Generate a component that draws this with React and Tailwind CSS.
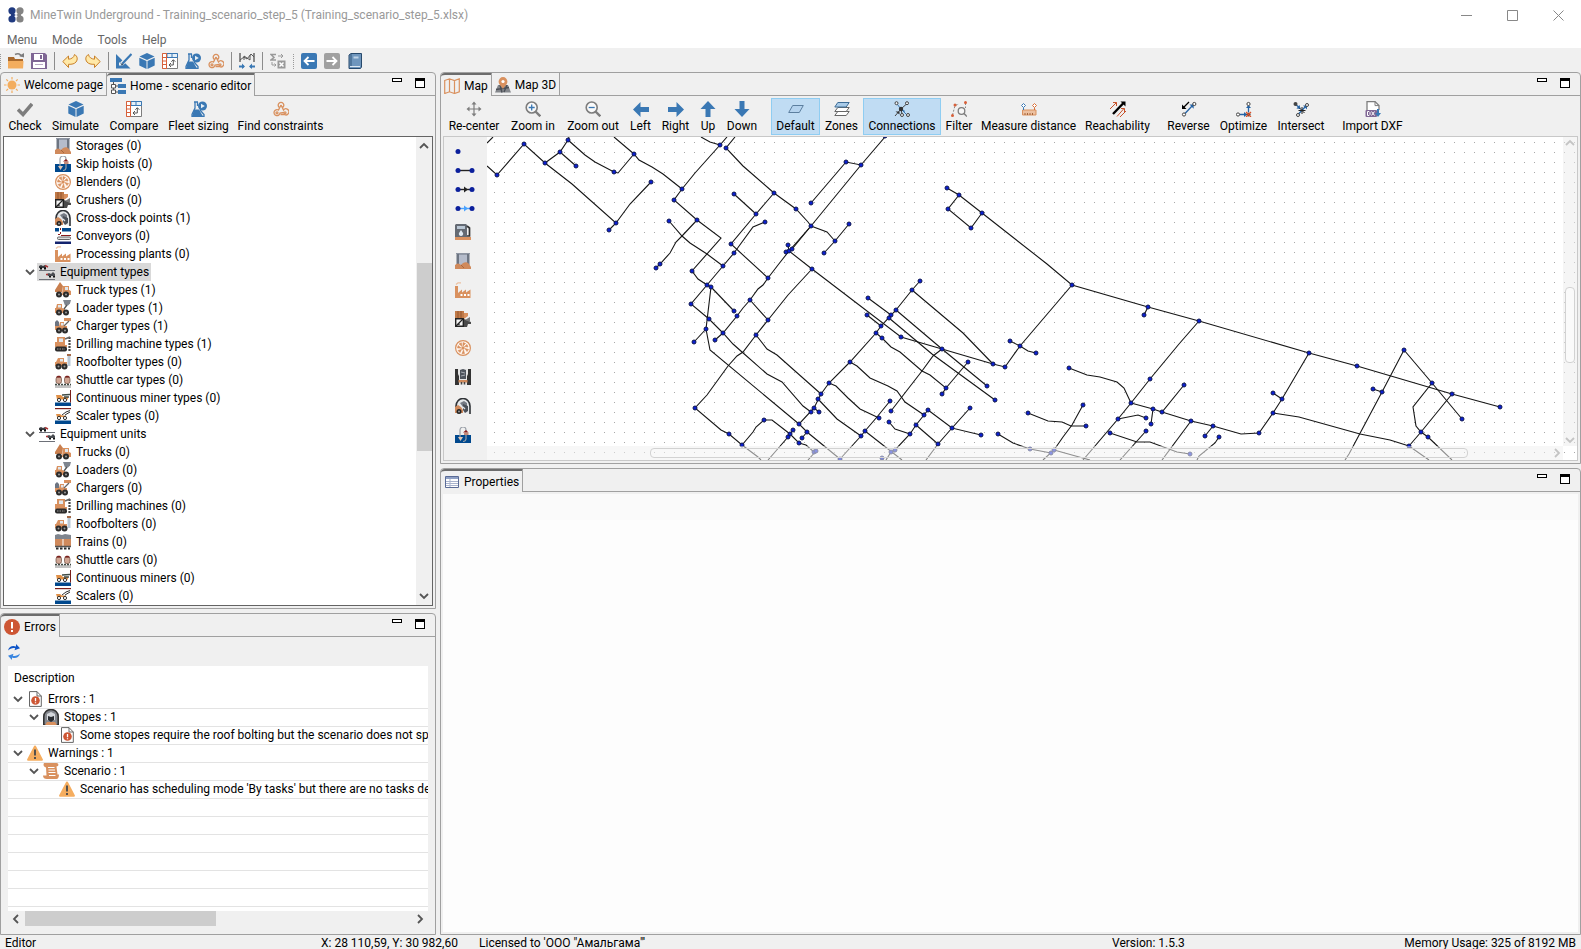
import { useState } from "react";

const BLUE = "#3a78b4";
const ORANGE = "#d9915f";
const GRAY = "#7d7d7d";

const Svg = ({ children, size = 16 }) => (
  <svg width={size} height={size} viewBox="0 0 16 16" fill="none" className="block shrink-0" aria-hidden="true">
    {children}
  </svg>
);

/* wheels shared by all of the vehicles */
const Wheels = ({ a = 4, b = 11 }) => (
  <>
    <circle cx={a} cy="12.5" r="3" fill="#2b2b2b" />
    <circle cx={b} cy="12.5" r="3" fill="#2b2b2b" />
    <circle cx={a} cy="12.5" r="1" fill="#9a9a9a" />
    <circle cx={b} cy="12.5" r="1" fill="#9a9a9a" />
  </>
);

const icons = {
  logo: (
    <Svg>
      <circle cx="4" cy="3.8" r="3.6" fill="#1f3a80" />
      <circle cx="4" cy="12" r="3.6" fill="#1f3a80" />
      <circle cx="12" cy="3.8" r="3.6" fill="#838383" />
      <circle cx="12" cy="12" r="3.6" fill="#838383" />
      <path d="M4 3v10M3 6l3 2-3 2" stroke="#1f3a80" strokeWidth="2" />
      <path d="M12 3v10M13 6l-3 2 3 2" stroke="#838383" strokeWidth="2" />
    </Svg>
  ),
  open: (
    <Svg>
      <path d="M0 4h6l1 2h8v3H0z" fill="#a9692c" />
      <path d="M0 15.500V8h15.500L15 15.500z" fill="#f3ad5e" />
      <path d="M7 1.500c3-1.500 6-.500 6.500 2" stroke={GRAY} strokeWidth="1.500" />
      <path d="M11 3l5 1.500V0z" fill={GRAY} />
    </Svg>
  ),
  save: (
    <Svg>
      <path d="M0 0h14l2 2v14H0z" fill="#7f6694" />
      <path d="M3 1h9v6H3zM2 9h12v6H2z" fill="#fff" />
      <path d="M9 2h2v4H9z" fill="#7f6694" />
      <path d="M4 11.500h8" stroke="#b8a9c4" />
    </Svg>
  ),
  undo: (
    <Svg>
      <path d="M.8 8.500l5.700-5.500v3.200C9.500 6 12 4.500 12.500 1.500c3 1.500 3.500 5 1.500 7.500-1.500 1.800-4 2.500-7.500 2.300V14.500z" fill="#ffe9a8" stroke="#c9812a" />
    </Svg>
  ),
  redo: (
    <Svg>
      <path d="M15.200 8.500L9.500 3v3.200C6.500 6 4 4.500 3.500 1.500.5 3 0 6.500 2 9c1.500 1.800 4 2.500 7.500 2.300V14.500z" fill="#ffe9a8" stroke="#c9812a" />
    </Svg>
  ),
  design: (
    <Svg>
      <path d="M0 1l14.500 14.500H0z" fill={BLUE} />
      <path d="M3 9l3.500 3.500H3z" fill="#f0f0f0" />
      <path d="M15.500 1.500L5.500 11" stroke="#f0f0f0" strokeWidth="4" />
      <path d="M15.500 1L6.500 10.500" stroke={BLUE} strokeWidth="2.200" />
      <path d="M5 12.500l.7-2.700 2 1.800z" fill="#33506e" />
    </Svg>
  ),
  cube: (
    <Svg>
      <path d="M8 0l7.500 3.500L8 7 .5 3.500z" fill={BLUE} />
      <path d="M.3 4.700L7.500 8v8L.3 12.500zM15.700 4.700L8.500 8v8l7.200-3.500z" fill={BLUE} />
    </Svg>
  ),
  compare: (
    <Svg>
      <path d="M.5.500h15v15H.5z" fill="#fff" stroke={GRAY} />
      <path d="M5 .500h10.500V4.500H5z" fill="#e6f0f8" stroke={BLUE} />
      <path d="M10 1v3" stroke={BLUE} />
      <path d="M.5.500h4v15h-4zM.5 4.500h4M.5 8h4M.5 11.500h4" fill="#fff" stroke="#d8603a" />
      <path d="M7.500 12h3.800V7M9 10l-2 2 2 2M9.300 8.700l2-2 2 2" stroke="#555" />
    </Svg>
  ),
  flask: (
    <Svg>
      <path d="M3 1h4M4 1v6L1 13.500V15.500h12v-2L9 9M6.500 1v4" stroke={BLUE} strokeWidth="1.300" />
      <path d="M3 8.500h5l4 7H1z" fill={BLUE} />
      <circle cx="11.500" cy="5" r="4.500" fill={BLUE} />
      <path d="M10 2.800v4.400L13.800 5z" fill="#e8f0f6" />
    </Svg>
  ),
  knot: (
    <Svg>
      <g stroke={ORANGE} strokeWidth="1.300">
        <path d="M6.500 6.500a2.800 2.800 0 1 1 3 0M8 4l2.500 5a3 3 0 1 1 1 4.500H7.500" />
        <path d="M8 4L5.500 9a3 3 0 1 0 1.500 3l4-.5" />
        <circle cx="4" cy="11.800" r="1" />
        <circle cx="12" cy="11.800" r="1" />
      </g>
    </Svg>
  ),
  graph: (
    <Svg>
      <path d="M1 0v9M15 0v9" stroke="#222" />
      <path d="M1 7l4-3 3 2 4-5 3 3M5 7V3l6 4V2" stroke="#555" />
      <path d="M0 13.500h5M16 13.500h-5" stroke={BLUE} strokeWidth="2" />
      <path d="M3 10.500l3 3-3 2.500zM13 10.500l-3 3 3 2.500z" fill={BLUE} />
    </Svg>
  ),
  formula: (
    <Svg>
      <path d="M6 1.500H1L4 4.500 1 7h5" stroke="#999" strokeWidth="1.500" />
      <path d="M8 3h5m-2-2l2 2-2 2M2 9v3h4M4.500 10.500l1.500 1.500-1.500 1.500" stroke="#999" />
      <path d="M7.500 7.500h8v8h-8z" fill="#999" />
      <path d="M9.500 9.500l4 4m0-4l-4 4" stroke="#fff" strokeWidth="1.500" />
    </Svg>
  ),
  back: (
    <Svg>
      <rect width="16" height="16" rx="2" fill={BLUE} />
      <path d="M13.500 8H3.500M7.500 4l-4 4 4 4" stroke="#fff" strokeWidth="1.800" />
    </Svg>
  ),
  forward: (
    <Svg>
      <rect width="16" height="16" rx="2" fill="#a0a0a0" />
      <path d="M2.500 8h10M8.500 4l4 4-4 4" stroke="#fff" strokeWidth="1.800" />
    </Svg>
  ),
  book: (
    <Svg>
      <path d="M2 2l2-1.500h10.500V14l-1 1.500H2z" fill="#6f96bd" stroke="#27496c" />
      <path d="M4 1v12" stroke="#35597d" />
      <path d="M6.500 3.500h5v2h-5z" fill="#bfd3e6" />
      <path d="M3 13.500h10" stroke="#dce7f0" />
    </Svg>
  ),
  sun: (
    <Svg>
      <circle cx="8" cy="8" r="4.500" fill="#f3ad5e" />
      <path d="M8 0v2.500M8 13.500V16M0 8h2.500M13.500 8H16M2.300 2.300L4 4M12 12l1.700 1.700M2.300 13.700L4 12M12 4l1.700-1.700" stroke="#f3ad5e" strokeWidth="1.200" />
    </Svg>
  ),
  home: (
    <Svg>
      <path d="M0 0h12v4H0zM8 6h8v4H8zM8 12h8v4H8z" fill={BLUE} />
      <path d="M3.500 4v3M3.500 10v2M6 8h2M6 14h2" stroke="#555" />
      <path d="M1.500 6.500h4v3.500h-4zM1.500 12h4v3.500h-4z" fill="#fff" stroke="#555" />
    </Svg>
  ),
  check: (
    <Svg>
      <path d="M1 8.500l5 5L15 3" stroke={GRAY} strokeWidth="3.500" />
    </Svg>
  ),
  map: (
    <Svg>
      <path d="M.7 2.500L5.500.8l5 1.700 4.800-1.700v13l-4.800 1.700-5-1.700-4.800 1.700zM5.500.800v13M10.500 2.500v13" stroke={ORANGE} strokeWidth="1.200" />
    </Svg>
  ),
  map3d: (
    <Svg>
      <path d="M0 15.500L3 8h10l3 7.500z" fill="#84878c" />
      <path d="M5 8l2 7.500M9 15l3-7M1 12.500l13-2" stroke="#4b4f56" strokeWidth="1.400" />
      <path d="M8 12C6 8.500 3.600 7.500 3.600 4.500a4.400 4.400 0 0 1 8.800 0C12.400 7.500 10 8.500 8 12z" fill={ORANGE} />
      <circle cx="8" cy="4.500" r="1.600" fill="#fff" />
    </Svg>
  ),
  recenter: (
    <Svg>
      <path d="M8 2v12M2 8h12" stroke={GRAY} strokeWidth="1.200" />
      <path d="M8 .500l2.500 3h-5zM8 15.500l2.500-3h-5zM.5 8l3-2.500v5zM15.500 8l-3-2.500v5z" fill={GRAY} />
    </Svg>
  ),
  zoomIn: (
    <Svg>
      <circle cx="6.700" cy="6.500" r="5.500" fill="#fafafa" stroke={GRAY} strokeWidth="1.600" />
      <path d="M10.500 10.500l4.800 4.800" stroke={GRAY} strokeWidth="2.400" />
      <path d="M3.700 6.500h6M6.700 3.500v6" stroke={BLUE} strokeWidth="1.300" />
    </Svg>
  ),
  zoomOut: (
    <Svg>
      <circle cx="6.700" cy="6.500" r="5.500" fill="#fafafa" stroke={GRAY} strokeWidth="1.600" />
      <path d="M10.500 10.500l4.800 4.800" stroke={GRAY} strokeWidth="2.400" />
      <path d="M3.700 6.500h6" stroke={BLUE} strokeWidth="1.300" />
    </Svg>
  ),
  left: <Svg><path d="M0 8.500L7.500 1v5H16v5H7.500v5z" fill={BLUE} /></Svg>,
  right: <Svg><path d="M16 8.500L8.500 1v5H0v5h8.500v5z" fill={BLUE} /></Svg>,
  up: <Svg><path d="M8 0L.5 8h5v8h5V8h5z" fill={BLUE} /></Svg>,
  down: <Svg><path d="M8 16L.5 8h5V0h5v8h5z" fill={BLUE} /></Svg>,
  layer: <Svg><path d="M.7 11.500l4-7h10.600l-4 7z" fill="#b5d3ee" stroke="#5c7f9f" /></Svg>,
  zones: (
    <Svg>
      <path d="M.8 14.500l3-4h11.400l-3 4z" fill="#fff" stroke="#666" />
      <path d="M.8 10.500l3-4h11.400l-3 4z" fill="#fff" stroke="#666" />
      <path d="M.8 6l3-4.500h11.400l-3 4.500z" fill="#a9cbe8" stroke="#3d6c96" />
    </Svg>
  ),
  connections: (
    <Svg>
      <path d="M7 8L3 3M7 8l6 6M7.500 8L11 10.500" stroke={BLUE} />
      <path d="M7 8l5.500-5M7 8l1 5M1 15l6-7" stroke="#444" />
      <circle cx="7" cy="8" r="2.200" fill="#333" />
      <path d="M1.500 10.500H5.500v3z" fill="#333" />
      <g fill="#f0f6fb" stroke="#444">
        <circle cx="2.500" cy="2.200" r="1.500" />
        <circle cx="13" cy="2.200" r="1.500" />
        <circle cx="8" cy="14" r="1.500" />
        <circle cx="14" cy="14" r="1.500" />
      </g>
    </Svg>
  ),
  filter: (
    <Svg>
      <path d="M1.500 14L4 4.500l4-1.500M14.500 2v5" stroke="#888" strokeDasharray="2 1.500" />
      <g fill="#d8603a">
        <circle cx="4" cy="4" r="1.500" />
        <circle cx="1.500" cy="14.500" r="1.500" />
        <circle cx="14.500" cy="1.500" r="1.500" />
      </g>
      <circle cx="10.500" cy="10" r="3.300" fill="#f6f6f6" stroke={GRAY} strokeWidth="1.300" />
      <path d="M13 12.500l3 3" stroke={GRAY} strokeWidth="1.500" />
    </Svg>
  ),
  measure: (
    <Svg>
      <path d="M1.500 9h13.500v5H1.500z" fill="#ecc0a0" stroke={ORANGE} />
      <path d="M4 14v-2M6.500 14v-2M9 14v-2M11.500 14v-2" stroke="#a5663c" />
      <path d="M2.500 6.500V9" stroke={BLUE} />
      <path d="M13.500 6.500V9" stroke="#d8703a" />
      <path d="M2.500 2.500l2 2-2 2-2-2z" fill="#fff" stroke={BLUE} />
      <path d="M13.500 2.500l2 2-2 2-2-2z" fill="#fff" stroke="#d8703a" />
    </Svg>
  ),
  reach: (
    <Svg>
      <path d="M0 8l6.500-6.500M3 1.500h3.500V5M7 15.500l7-8M11 7.500h3.500V11M10 16l6-6" stroke="#c8532c" />
      <path d="M3 13L14 1.500" stroke="#000" strokeWidth="2.400" />
      <path d="M10.500.500H15.500V5.500z" fill="#000" />
    </Svg>
  ),
  reverse: (
    <Svg>
      <path d="M8 1L2.500 6.500" stroke="#000" strokeWidth="1.200" />
      <path d="M1 3.500V8h4.500z" fill="#000" />
      <path d="M4 12.500l8-8.500" stroke="#2563a5" strokeWidth="1.300" />
      <path d="M8.500 3.500h4.200v4.200z" fill="#2563a5" />
      <circle cx="3" cy="13.500" r="1.600" fill="#fff" stroke="#444" />
      <circle cx="13.300" cy="3" r="1.600" fill="#fff" stroke="#444" />
    </Svg>
  ),
  optimize: (
    <Svg>
      <path d="M3.500 13.500h7M12.500 11V5" stroke="#2563a5" strokeWidth="1.300" />
      <path d="M8 11l3 2.500L8 16zM10 7l2.500-3L15 7z" fill="#2563a5" />
      <circle cx="2" cy="13.500" r="1.600" fill="#fff" stroke="#444" />
      <circle cx="12.500" cy="3" r="1.600" fill="#fff" stroke="#444" />
      <circle cx="12.500" cy="13.500" r="2" fill="#333" />
      <path d="M10 11l5 5m0-5l-5 5" stroke="#d8532c" strokeWidth="1.200" />
    </Svg>
  ),
  intersect: (
    <Svg>
      <path d="M2 3l5 4M5 13.500l8.500-9" stroke="#2563a5" strokeWidth="1.300" />
      <path d="M7.500 8l-4-.500L6.500 4zM10 4.500h4v4z" fill="#2563a5" />
      <path d="M9 6v7M5.500 9.500h7M6.500 7l5 5" stroke="#222" />
      <circle cx="2.500" cy="3" r="2" fill="#444" />
      <circle cx="5" cy="14" r="1.500" fill="#fff" stroke="#444" />
      <circle cx="14" cy="4" r="1.500" fill="#fff" stroke="#444" />
    </Svg>
  ),
  dxf: (
    <Svg>
      <path d="M2 9V.600h8L14 4.500V9" fill="#fff" stroke={GRAY} strokeWidth="1.300" />
      <path d="M10 .600v4h4" stroke={GRAY} />
      <rect x=".5" y="9" width="11.500" height="7" rx="1" fill="#7f6694" />
      <path d="M2.500 10.500h1.500l1 1v2l-1 1H2.500zM6.500 10.500l3 4m0-4l-3 4" stroke="#fff" />
      <path d="M13 8v5" stroke={BLUE} strokeWidth="2" />
      <path d="M10 12h6l-3 4z" fill={BLUE} />
    </Svg>
  ),
  storage: (
    <Svg>
      <path d="M1.500 0h13v12h-13z" fill="#6d7582" />
      <path d="M4 1.500h8V12H4z" fill="#b5bccb" />
      <path d="M1 .500h14" stroke="#8e95a2" />
      <path d="M0 16v-4c2-2 4-2 6 0 2-3 6-4 8-1l2 3v2z" fill="#d08a5c" />
      <path d="M6 12l3 3" stroke="#a9663c" />
    </Svg>
  ),
  skip: (
    <Svg>
      <path d="M0 8h16v8H0z" fill="#00488d" />
      <path d="M5 12V3a3 3 0 0 1 6 0v9a3 3 0 0 1-3 2.500" stroke="#9aa0a8" strokeWidth="1.200" />
      <path d="M3 10l2.500 4L8 10z" fill="#e2c7b5" />
      <path d="M8 5.500l3-2.500 2.500 2.500z" fill="#8a1c1c" />
      <path d="M9 5.500h4.500V8H9z" fill="#c48a7a" />
    </Svg>
  ),
  blender: (
    <Svg>
      <circle cx="8" cy="8" r="7.400" fill="#fff6ef" stroke={ORANGE} strokeWidth="1.200" />
      <path d="M8 6V2.500l2.500 1zM9.500 6.500l2.500-2 1 2.500zM10 8.500l3.500 1-1.500 2zM8.500 10l1 3.500-2.500.200zM6.500 9.500l-1.500 3-2-2zM6 8l-3.500 0 .600-2.500zM7 6.300L4 4l2.300-1.300z" fill={ORANGE} stroke={ORANGE} strokeWidth=".6" />
      <circle cx="8" cy="8" r="1.700" fill={ORANGE} />
    </Svg>
  ),
  crusher: (
    <Svg>
      <path d="M0 0h9v7H0z" fill="#c07a48" />
      <path d="M3 0v7M6 0v7" stroke="#96572f" />
      <path d="M9 2h4v3L9 8z" fill="#d9915f" />
      <path d="M.7 7.700h7.600v7.600H.7z" fill="#f3f3f3" stroke="#222" strokeWidth="1.400" />
      <path d="M1 15l7-7M4 12v2" stroke="#222" strokeWidth="1.200" />
      <path d="M9 8l7 3v2l-3 0-1 3H9z" fill="#4a4a4a" />
      <path d="M10 9l5-3v5z" fill="#777" />
    </Svg>
  ),
  crossdock: (
    <Svg>
      <path d="M1 12V8a7 7.500 0 0 1 14 0v8" fill="#e6e8ea" stroke="#2f3236" strokeWidth="1.600" />
      <path d="M5 5l4-2 3 2v3l-4 1z" fill="#767b84" />
      <path d="M8 6l5 2v5l-3 2-2-3z" fill="#4b5058" />
      <path d="M8 9l2 2" stroke="#dfe2e6" strokeWidth="1.200" />
      <path d="M0 9l3-2 3 2 2 3v3H0z" fill="#d08a5c" />
      <circle cx="4" cy="13.500" r="2.500" fill="#222" />
      <circle cx="4" cy="13.500" r=".9" fill="#aaa" />
    </Svg>
  ),
  conveyor: (
    <Svg>
      <path d="M0 0h4v3.500H0zM7 0h9v3.500H7z" fill="#00488d" />
      <path d="M5.500 0v2M5.500 4v2M3 6.500h2M6 7.500h10" stroke="#8a1c1c" />
      <rect x="2.500" y="9" width="13" height="2.500" rx="1" fill="#ddd" stroke="#666" />
      <path d="M0 13.500h16V16H0z" fill="#14246e" />
    </Svg>
  ),
  plant: (
    <Svg>
      <path d="M0 16V4h3v7l4-3.500v3l4-3v3l4.500-3V16z" fill={ORANGE} />
      <path d="M1 2.500L3 .800h3" stroke="#ecc0a0" strokeWidth="1.300" />
      <path d="M5.500 12h2v2h-2zM9 12h2v2H9zM12.500 12h2v2h-2z" fill="#fff" />
    </Svg>
  ),
  types: (
    <Svg>
      <path d="M0 6.500h16M0 15.500h16" stroke="#6d7078" />
      <path d="M0 2l2-1 2 1 2-1 1 2v1H0z" fill="#3a3d42" />
      <path d="M6 1.500l3 1.500" stroke="#a33" strokeWidth="1.500" />
      <path d="M1 4.500h2M5 4.500h2M10 12.500h2M14 12.500h2" stroke="#111" strokeWidth="2" />
      <path d="M8 10l2-1 2 1 2-2 2 2v2H9z" fill="#4a4d52" />
      <path d="M7 10.500h2" stroke="#a33" strokeWidth="1.500" />
    </Svg>
  ),
  truck: (
    <Svg>
      <path d="M0 8l5-8 3 4-1 6H0z" fill="#c97f4e" />
      <path d="M8 4h6v4l2 1v4H7z" fill="#d9915f" />
      <path d="M10 5h3v3h-3z" fill="#dfe7ee" />
      <Wheels />
    </Svg>
  ),
  loader: (
    <Svg>
      <path d="M1 8l1-4h5v4l3 1v4H0V8z" fill="#d9915f" />
      <path d="M3 5h3v2.500H3z" fill="#dfe7ee" />
      <path d="M8 0h8l-1 3.500-2 2h-3z" fill="#7f858e" />
      <path d="M9 9l3-4" stroke="#555" strokeWidth="1.300" />
      <Wheels />
    </Svg>
  ),
  charger: (
    <Svg>
      <path d="M0 4l2-2 2 2v4H0z" fill="#6d7582" />
      <path d="M0 8h4l1-4h4v4h3v4H0z" fill="#d9915f" />
      <path d="M6 5h2.500v2.500H6z" fill="#dfe7ee" />
      <path d="M9 0h7v3H9z" fill="#d9915f" />
      <path d="M9 8l5-5" stroke="#666" strokeWidth="1.300" />
      <Wheels b={10} />
    </Svg>
  ),
  drill: (
    <Svg>
      <path d="M2 1h8v8h2v2H0V6h2z" fill="#d9915f" />
      <path d="M4 2.500h4V6H4z" fill="#dfe7ee" />
      <rect x="0" y="10.500" width="12" height="5" rx="2" fill="#2b2b2b" />
      <path d="M2 13h8" stroke="#999" strokeDasharray="1.500 1" />
      <path d="M14.500 1v15" stroke="#444" strokeWidth="2.200" strokeDasharray="2 1" />
      <path d="M10 3l5-2" stroke="#666" strokeWidth="1.500" />
    </Svg>
  ),
  bolter: (
    <Svg>
      <path d="M1 8l2-4h6v4h3v4H0V8z" fill="#d9915f" />
      <path d="M5 5h3v2.500H5z" fill="#dfe7ee" />
      <path d="M12.500 1.500h3V12h-3z" fill="#b9c8d6" />
      <path d="M12 0h4v2h-4z" fill="#a56a48" />
      <Wheels a={3.500} b={9.500} />
    </Svg>
  ),
  shuttle: (
    <Svg>
      <path d="M0 13h16v3H0z" fill="#c2c2c2" />
      <path d="M0 12.500h16" stroke="#3f4a44" strokeWidth="1.600" strokeDasharray="2 1" />
      <rect x="1" y="5" width="5.500" height="6.500" rx="2" fill="#cfa594" stroke="#6a4a3c" strokeWidth=".7" />
      <rect x="9.500" y="5" width="5.500" height="6.500" rx="2" fill="#cfa594" stroke="#6a4a3c" strokeWidth=".7" />
      <path d="M1 5.500C1.500 3 6 3 6.500 5.500zM9.500 5.500C10 3 14.500 3 15 5.500z" fill="#7a1f1a" />
    </Svg>
  ),
  miner: (
    <Svg>
      <path d="M0 12.500h16V16H0z" fill="#00488d" />
      <path d="M15.500 0v12.500" stroke="#7a1f1a" />
      <path d="M1 5h5l2 2h5v2.500H2z" fill="#e09048" />
      <path d="M7 5l8-.500M9 7h5" stroke="#3f4a44" strokeWidth="1.300" />
      <circle cx="4" cy="10" r="1.600" fill="#fff" stroke="#333" />
      <circle cx="10" cy="10" r="1.600" fill="#fff" stroke="#333" />
    </Svg>
  ),
  scaler: (
    <Svg>
      <path d="M0 12.500h16V16H0z" fill="#00488d" />
      <path d="M0 .600h16" stroke="#7a1f1a" strokeWidth="1.200" />
      <path d="M1 6h4l2 1.500h4V9H2z" fill="#e09048" />
      <path d="M7 7l4-3 4-1.500M10 7l5-3" stroke="#333" />
      <circle cx="4" cy="10" r="1.600" fill="#fff" stroke="#333" />
      <circle cx="10" cy="10" r="1.600" fill="#fff" stroke="#333" />
    </Svg>
  ),
  train: (
    <Svg>
      <path d="M0 1l3-1 4 1 3-1 6 1v4H0z" fill="#7f858e" />
      <path d="M0 5h7.500v7H0zM8.500 5H16v7H8.500z" fill="#d08a5c" />
      <path d="M0 12.500h16" stroke="#555" strokeWidth="1.500" />
      <path d="M1 14.500h14" stroke="#2b2b2b" strokeWidth="2" strokeDasharray="2.500 1.500" />
    </Svg>
  ),
  fuel: (
    <Svg>
      <path d="M0 13h16v3H0z" fill={ORANGE} />
      <path d="M0 1l1-1h10l1 1v12H0z" fill="#646a73" />
      <path d="M2 2h8v3H2z" fill="#b9c6d3" />
      <path d="M6 6l2 3a2.200 2.200 0 1 1-4 0z" fill="#dfe9f2" />
      <path d="M12 2l2.500 2v8H12" stroke="#333" strokeWidth="1.700" />
    </Svg>
  ),
  stopeWide: (
    <Svg>
      <path d="M0 0h3v4l1 3v9H0zM16 0h-3v4l-1 3v9h4z" fill="#333" />
      <path d="M3 0h10v4l-1 3v9H4V7L3 4z" fill="#e6e6e6" />
      <path d="M5 1l3-1 3 1v9H5z" fill="#4d535c" />
      <path d="M6 3l4 1M6 7l4-1" stroke="#a8adb5" />
      <path d="M3.500 11h9v2.500h-9z" fill="#d08a5c" />
      <path d="M6.500 13v2.500M9.500 13v2.500" stroke="#444" strokeWidth="1.500" />
    </Svg>
  ),
  error: (
    <Svg>
      <circle cx="8" cy="8" r="8" fill="#cd5634" />
      <path d="M8 3v6.500M8 11v2" stroke="#fff" strokeWidth="2" />
    </Svg>
  ),
  errorFile: (
    <Svg>
      <path d="M2.500.600H10L14.300 5v10.400H2.500z" fill="#fff" stroke="#666" />
      <path d="M10 .600V5h4.300" stroke="#666" />
      <circle cx="8.500" cy="9.500" r="4.300" fill="#cd5634" />
      <path d="M8.500 7v3.300M8.500 11.200v1" stroke="#fff" strokeWidth="1.300" />
    </Svg>
  ),
  stope: (
    <Svg>
      <path d="M.8 16V7.500a7.200 7 0 0 1 14.400 0V16z" fill="#85888e" stroke="#333" strokeWidth="1.600" />
      <path d="M4 5l4-2 4 2v6l-4 1-4-1z" fill="#d5d8dc" />
      <path d="M5 7l3 1 3-1v4l-3 2-3-2z" fill="#2b2e33" />
      <path d="M2 16l2-3h8l2 3z" fill={ORANGE} />
    </Svg>
  ),
  warning: (
    <Svg>
      <path d="M8 .500c.6 0 .9.300 1.200.9l6.600 12.800c.4.900 0 1.600-.9 1.600H1.100c-.9 0-1.300-.7-.9-1.600L6.800 1.400C7.100.800 7.400.500 8 .500z" fill="#f5ad5f" />
      <path d="M8 4.500v6M8 12v2" stroke="#4d4d4d" strokeWidth="1.900" />
    </Svg>
  ),
  scroll: (
    <Svg>
      <path d="M1 0h12.500C16 0 16 3.500 13.500 3.500L14.500 11.500H16c0 2.500-1 4.500-2.500 4.500H4c-2.500 0-4-1-4-3.500h3.500L3 4.500C.5 4 0 1.500 1 0z" fill={ORANGE} />
      <path d="M5 4.500h6.500M5.500 7h6.500M5.500 9.500h7M6 12.500h6.500" stroke="#fff" strokeWidth="1.200" />
    </Svg>
  ),
  refresh: (
    <Svg>
      <path d="M2 6.500C3 2 7 1.200 10 2.500V0l4 4.300-5.500 2 .7-2C7 3.500 4 4.500 2 6.500z" fill="#0f55c8" />
      <path d="M14 9.500c-1 4.500-5 5.300-8 4V16l-4-4.300 5.500-2-.7 2c2.200.8 5.200-.2 7.200-2.200z" fill="#3a86e0" />
    </Svg>
  ),
  properties: (
    <Svg>
      <path d="M1.500 2.500h13v11h-13z" fill="#fff" stroke="#5a6b96" />
      <path d="M2 3h12v2H2z" fill="#8fa0c4" />
      <path d="M2 7.500h12M2 9.500h12M2 11.500h12M6 5v8" stroke="#a9b3cd" />
    </Svg>
  ),
};

const mainTools = ["open", "save", "|", "undo", "redo", "|", "design", "cube", "compare", "flask", "knot", "|", "graph", "|", "formula", ":", "back", "forward", "book"];

const editorTools = [
  { label: "Check", icon: "check", w: "w-[44px]" },
  { label: "Simulate", icon: "cube", w: "w-[57px]" },
  { label: "Compare", icon: "compare", w: "w-[60px]" },
  { label: "Fleet sizing", icon: "flask", w: "w-[69px]" },
  { label: "Find constraints", icon: "knot", w: "w-[95px]" },
];

const mapTools = [
  { label: "Re-center", icon: "recenter", w: "w-[62px]" },
  { label: "Zoom in", icon: "zoomIn", w: "w-[56px]" },
  { label: "Zoom out", icon: "zoomOut", w: "w-[64px]" },
  { label: "Left", icon: "left", w: "w-[31px]" },
  { label: "Right", icon: "right", w: "w-[39px]" },
  { label: "Up", icon: "up", w: "w-[26px]" },
  { label: "Down", icon: "down", w: "w-[42px]" },
  null,
  { label: "Default", icon: "layer", w: "w-[49px]", active: true },
  { label: "Zones", icon: "zones", w: "w-[43px]" },
  { label: "Connections", icon: "connections", w: "w-[78px]", active: true },
  { label: "Filter", icon: "filter", w: "w-[36px]" },
  { label: "Measure distance", icon: "measure", w: "w-[103px]" },
  { label: "Reachability", icon: "reach", w: "w-[75px]" },
  null,
  { label: "Reverse", icon: "reverse", w: "w-[51px]" },
  { label: "Optimize", icon: "optimize", w: "w-[59px]" },
  { label: "Intersect", icon: "intersect", w: "w-[56px]" },
  null,
  { label: "Import DXF", icon: "dxf", w: "w-[71px]" },
];

const tree = [
  { label: "Storages (0)", icon: "storage" },
  { label: "Skip hoists (0)", icon: "skip" },
  { label: "Blenders (0)", icon: "blender" },
  { label: "Crushers (0)", icon: "crusher" },
  { label: "Cross-dock points (1)", icon: "crossdock" },
  { label: "Conveyors (0)", icon: "conveyor" },
  { label: "Processing plants (0)", icon: "plant" },
  { label: "Equipment types", icon: "types", group: true },
  { label: "Truck types (1)", icon: "truck" },
  { label: "Loader types (1)", icon: "loader" },
  { label: "Charger types (1)", icon: "charger" },
  { label: "Drilling machine types (1)", icon: "drill" },
  { label: "Roofbolter types (0)", icon: "bolter" },
  { label: "Shuttle car types (0)", icon: "shuttle" },
  { label: "Continuous miner types (0)", icon: "miner" },
  { label: "Scaler types (0)", icon: "scaler" },
  { label: "Equipment units", icon: "types", group: true },
  { label: "Trucks (0)", icon: "truck" },
  { label: "Loaders (0)", icon: "loader" },
  { label: "Chargers (0)", icon: "charger" },
  { label: "Drilling machines (0)", icon: "drill" },
  { label: "Roofbolters (0)", icon: "bolter" },
  { label: "Trains (0)", icon: "train" },
  { label: "Shuttle cars (0)", icon: "shuttle" },
  { label: "Continuous miners (0)", icon: "miner" },
  { label: "Scalers (0)", icon: "scaler" },
];

const problems = [
  { label: "Errors : 1", icon: "errorFile", pad: "pl-1", open: true },
  { label: "Stopes : 1", icon: "stope", pad: "pl-5", open: true },
  { label: "Some stopes require the roof bolting but the scenario does not specify", icon: "errorFile", pad: "pl-9" },
  { label: "Warnings : 1", icon: "warning", pad: "pl-1", open: true },
  { label: "Scenario : 1", icon: "scroll", pad: "pl-5", open: true },
  { label: "Scenario has scheduling mode 'By tasks' but there are no tasks defined", icon: "warning", pad: "pl-9" },
];

/* tunnels of the mine, as polylines in plan units */
const tunnels = [
  "487,166 497,175 524,144 545,163 560,152 568,140 569,137",
  "487,143 493,137",
  "560,152 576,166",
  "568,140 585,155 595,162 614,172 618,173 634,154",
  "614,137 634,154 639,160 652,167 663,174 682,189",
  "545,163 572,184 616,223 609,230",
  "616,223 630,204 651,182",
  "682,189 695,173 720,145 727,137",
  "701,137 710,142 720,145",
  "735,137 726,148 743,166 774,193",
  "682,189 674,200 697,220 721,238 692,271 698,279 707,285 711,287",
  "697,220 682,236 676,242 670,253 660,264 656,268",
  "669,221 682,236 690,243 707,254 723,266",
  "734,194 756,214",
  "774,193 756,214 731,244 768,278",
  "765,222 753,227 734,253 723,266 707,285 691,304 709,319 723,333 733,344 742,352 767,374 782,382 803,406 811,412",
  "774,193 796,209 808,222 811,226 827,232 835,241 849,224",
  "835,241 824,253",
  "811,203 846,162 861,165 885,137",
  "861,165 811,226 789,251",
  "811,226 792,249 786,252",
  "788,245 789,251 812,269 901,337 942,349 993,364 1005,367 1020,346 1072,285",
  "789,251 778,265 768,278 763,285 758,289 750,300 743,308 737,316 723,333 715,340",
  "711,287 734,311",
  "711,287 706,329 710,350 799,424",
  "706,329 694,342",
  "750,300 768,320 756,335 743,352 737,356 728,366 707,395 695,408 721,430 729,434 742,445 753,432 756,427 764,420 772,420 790,434 799,443 806,445 814,452",
  "812,269 788,295 768,320",
  "756,335 767,349 777,355 821,394",
  "742,445 758,457 761,460",
  "768,460 788,437 793,430",
  "920,281 912,290 896,310 881,326 876,333 850,362 829,383 821,394 814,408 799,424 807,432 840,459",
  "807,432 802,438",
  "814,408 819,412",
  "912,290 963,333 993,364",
  "868,298 891,315",
  "889,318 932,354 995,400",
  "896,310 942,349 987,386",
  "867,315 881,326",
  "876,333 882,338 891,347 900,352 922,371 930,375 946,388 942,394",
  "946,388 968,362",
  "942,349 933,356 922,371 908,389 891,411",
  "850,362 857,366 870,378 888,386 897,391 905,402 924,415",
  "829,383 836,386 848,398 860,409 879,418",
  "818,399 837,419 861,436",
  "890,401 877,417 865,431 861,436 840,459",
  "865,431 902,460",
  "889,422 895,429 910,434",
  "928,410 924,415 916,425 910,434 895,450 891,452 886,460",
  "928,410 952,428 970,408",
  "981,435 952,428 938,444 926,460",
  "916,425 938,444",
  "816,451 808,460",
  "998,434 1013,443 1030,449 1051,453",
  "1083,405 1072,425 1063,437 1054,450 1043,460",
  "1054,450 1090,460",
  "1028,413 1048,421 1062,422 1071,426 1086,426",
  "1069,368 1087,375 1100,377 1117,382 1124,388 1131,403",
  "1199,321 1179,344 1150,379 1131,403 1118,419 1083,460",
  "1131,403 1153,409 1162,412 1184,385",
  "1153,409 1151,424",
  "1118,419 1138,415 1146,418",
  "1110,433 1137,442 1150,442 1177,452 1190,454",
  "1146,431 1120,460",
  "1010,341 1020,346 1028,351 1036,353",
  "947,188 959,195 948,209 971,228 982,213",
  "959,195 982,213 1047,264 1072,285 1148,307 1199,321 1309,353 1357,366 1452,394 1500,407",
  "1148,307 1144,315",
  "1309,353 1282,399 1273,413 1259,433 1241,434 1213,426 1191,421 1162,412",
  "1273,393 1282,399",
  "1213,426 1205,436",
  "1191,421 1162,460",
  "1219,437 1215,443 1199,456 1197,460",
  "1273,413 1299,417 1360,434 1390,440 1409,446 1429,460",
  "1373,389 1382,392",
  "1404,350 1382,392 1349,454 1345,460",
  "1404,350 1432,383 1462,419",
  "1432,383 1413,407 1416,426 1421,432 1428,437 1452,460",
  "1452,394 1421,432 1409,446",
];

const nodes = `497,175 524,144 545,163 560,152 568,140 576,166 614,172 634,154 651,182 616,223 609,230 682,189 674,200
697,220 669,221 660,264 656,268 720,145 726,148 774,193 734,194 756,214 765,222 731,244 734,253 796,209 811,203 811,226
788,245 786,252 789,251 792,249 824,253 835,241 849,224 846,162 861,165 885,136 947,188 959,195 948,209 971,228 982,213
692,271 723,266 768,278 707,285 711,287 691,304 734,311 737,316 750,300 768,320 812,269 709,319 706,329 694,342 715,340
723,333 756,335 695,408 729,434 742,445 764,420 799,424 811,412 793,430 790,434 788,437 807,432 802,438 799,443 814,452
816,451 920,281 912,290 896,310 891,315 889,318 881,326 868,298 867,315 876,333 882,338 901,337 942,349 850,362 829,383
821,394 818,399 814,408 819,412 993,364 1005,367 1020,346 1010,341 1036,353 1072,285 1148,307 1144,315 968,362 946,388
942,394 987,386 995,400 890,401 891,411 879,418 865,431 861,436 889,422 910,434 916,425 924,415 928,410 952,428 970,408
981,435 938,444 998,434 1030,449 1054,450 1051,453 1028,413 1086,426 1083,405 1069,368 1131,403 1150,379 1153,409
1162,412 1151,424 1146,418 1118,419 1110,433 1146,431 895,450 891,452 882,458 840,459 1199,321 1309,353 1357,366
1452,394 1500,407 1404,350 1432,383 1462,419 1373,389 1382,392 1282,399 1273,393 1273,413 1259,433 1213,426 1191,421
1184,385 1205,436 1219,437 1190,454 1409,446 1421,432 1428,437`
  .split(/\s+/)
  .map((p) => p.split(",").map(Number));

const Chevron = ({ className = "", color = "#555" }) => (
  <svg width="10" height="10" viewBox="0 0 10 10" className={`block shrink-0 ${className}`} aria-hidden="true">
    <path d="M1 3l4 4 4-4" fill="none" stroke={color} strokeWidth="1.800" />
  </svg>
);

const PanelButtons = () => (
  <div className="ml-auto flex gap-[13px] pr-[10px] pt-[5px]">
    <button aria-label="Minimize panel" className="flex h-2.5 w-2.5 items-start">
      <span className="h-1 w-2.5 border border-black bg-white" />
    </button>
    <button aria-label="Maximize panel" className="h-2.5 w-2.5 border border-t-[3px] border-black bg-white" />
  </div>
);

const Tab = ({ icon, label, active, onClick }) => (
  <button
    onClick={onClick}
    className={
      active
        ? "-mb-px flex h-[23px] items-center gap-1 whitespace-nowrap rounded-tl border-r border-t-2 border-r-[#a0a0a0] border-t-[#6c6c6c] bg-[#f0f0f0] px-[3px]"
        : "flex h-[22px] items-center gap-1 whitespace-nowrap border-r border-[#a0a0a0] px-[3px] pt-px"
    }
  >
    {icons[icon]}
    {label}
  </button>
);

const TabBar = ({ children }) => (
  <div className="flex h-[23px] shrink-0 border-b border-[#a0a0a0]">
    {children}
    <PanelButtons />
  </div>
);

const ToolButton = ({ tool }) => (
  <button
    className={`flex h-[37px] shrink-0 flex-col items-center gap-px whitespace-nowrap border pt-[2px] leading-4 ${tool.w} ${
      tool.active ? "border-[#8fcdf2] bg-[#c0dcf3]" : "border-transparent"
    }`}
  >
    {icons[tool.icon]}
    <span>{tool.label}</span>
  </button>
);

const Handle = () => <span className="h-[15px] w-px border-l border-dotted border-[#999]" />;

const TitleBar = () => (
  <header className="shrink-0 bg-white text-[#666]">
    <div className="flex h-[30px] items-center pl-2 text-[#999]">
      {icons.logo}
      <h1 className="ml-[6px]">MineTwin Underground - Training_scenario_step_5 (Training_scenario_step_5.xlsx)</h1>
      <div className="ml-auto flex">
        {[["Minimize", "M0 5.500h11"], ["Maximize", "M.5.500h10v10H.5z"], ["Close", "M.5.500l10 10m0-10l-10 10"]].map(([name, d]) => (
          <button key={name} aria-label={name} className="flex h-[30px] w-[46px] items-center justify-center">
            <svg width="11" height="11" viewBox="0 0 11 11" fill="none" stroke="#888">
              <path d={d} />
            </svg>
          </button>
        ))}
      </div>
    </div>
    <nav className="flex h-[18px] items-end gap-[15px] pl-[7px]">
      <button>Menu</button>
      <button>Mode</button>
      <button>Tools</button>
      <button>Help</button>
    </nav>
  </header>
);

const MainToolbar = () => (
  <div className="flex h-6 shrink-0 items-center gap-[7px] pt-[2px]">
    <Handle />
    {mainTools.map((name, i) => {
      if (name === "|") return <span key={i} className="h-[18px] w-px bg-[#8c8c8c]" />;
      if (name === ":") return <Handle key={i} />;
      return (
        <button key={i} aria-label={name}>
          {icons[name]}
        </button>
      );
    })}
  </div>
);

const EditorPanel = ({ selected, onSelect }) => (
  <section className="flex min-h-0 flex-1 flex-col rounded-t border border-[#a0a0a0] pb-[2px]">
    <TabBar>
      <Tab icon="sun" label="Welcome page" />
      <Tab icon="home" label="Home - scenario editor" active />
    </TabBar>
    <div className="flex h-10 shrink-0 items-center pl-[2px]">
      {editorTools.map((t) => (
        <ToolButton key={t.label} tool={t} />
      ))}
    </div>
    <div className="mx-[2px] flex min-h-0 flex-1 border border-[#646464] bg-white">
      <ul className="min-w-0 flex-1 overflow-hidden">
        {tree.map((item) => (
          <li key={item.label} className={item.group ? "flex h-[18px] items-center pl-[21px]" : "flex h-[18px] items-center pl-[51px]"}>
            {item.group && <Chevron />}
            <button
              onClick={() => onSelect(item.label)}
              className={`flex h-[18px] items-center gap-[5px] whitespace-nowrap pr-[2px] ${item.group ? "ml-[2px] pl-[2px]" : ""} ${
                selected === item.label ? "bg-[#d9d9d9]" : ""
              }`}
            >
              {icons[item.icon]}
              {item.label}
            </button>
          </li>
        ))}
      </ul>
      <div className="flex w-4 flex-col items-center bg-[#f0f0f0]">
        <Chevron className="my-1 rotate-180" />
        <div className="min-h-0 w-full flex-[108]" />
        <div className="min-h-0 w-[15px] flex-[188] bg-[#cdcdcd]" />
        <div className="min-h-0 w-full flex-[136]" />
        <Chevron className="my-1" />
      </div>
    </div>
  </section>
);

const ErrorsPanel = () => (
  <section className="flex h-[322px] shrink-0 flex-col rounded-t border border-[#a0a0a0]">
    <TabBar>
      <Tab icon="error" label="Errors" active />
    </TabBar>
    <div className="flex h-[29px] shrink-0 items-center pl-[5px]">
      <button aria-label="Refresh">{icons.refresh}</button>
    </div>
    <div className="mx-[7px] min-h-0 flex-1 overflow-hidden bg-white">
      <table className="w-full table-fixed border-collapse">
        <thead>
          <tr className="h-6">
            <th className="pl-[6px] text-left font-normal">Description</th>
          </tr>
        </thead>
        <tbody>
          {problems.map((p) => (
            <tr key={p.label} className="h-[18px] border-b border-[#e3e3e3]">
              <td className="p-0">
                <div className={`flex h-[17px] items-center whitespace-nowrap ${p.pad}`}>
                  <span className="w-[15px] shrink-0">{p.open && <Chevron className="ml-px" />}</span>
                  {icons[p.icon]}
                  <span className="ml-[5px]">{p.label}</span>
                </div>
              </td>
            </tr>
          ))}
          {[1, 2, 3, 4, 5, 6].map((n) => (
            <tr key={n} className="h-[18px] border-b border-[#e3e3e3]">
              <td className="p-0" />
            </tr>
          ))}
        </tbody>
      </table>
    </div>
    <div className="mx-[7px] mb-2 flex h-[15px] shrink-0 items-center">
      <Chevron className="mx-[3px] rotate-90" />
      <div className="ml-px h-full w-[191px] bg-[#cdcdcd]" />
      <Chevron className="ml-auto mr-[3px] -rotate-90" />
    </div>
  </section>
);

const LinkIcon = ({ kind }) => (
  <svg width="22" height="7" viewBox="0 0 22 7" className="block" aria-hidden="true">
    {kind !== "node" && <path d="M4 3.500h13" stroke={kind === "flow" ? "#4aa3ff" : "#222"} strokeWidth="1.400" />}
    {kind !== "node" && kind !== "edge" && <path d="M10 .500l4 3-4 3z" fill={kind === "flow" ? "#4aa3ff" : "#222"} />}
    <circle cx="4" cy="3.500" r="2.500" fill="#0b1f9c" />
    {kind !== "node" && <circle cx="18" cy="3.500" r="2.500" fill="#0b1f9c" />}
  </svg>
);

const Plan = () => (
  <svg width="100%" height="100%" className="block" role="img" aria-label="Mine plan">
    <defs>
      <pattern id="dots" x="7" y="5" width="10" height="10" patternUnits="userSpaceOnUse">
        <rect width="1" height="1" fill="#a8a8a8" />
      </pattern>
    </defs>
    <rect width="100%" height="100%" fill="#fff" />
    <rect width="100%" height="100%" fill="url(#dots)" />
    <g transform="translate(-487 -137)">
      {tunnels.map((t) => (
        <polyline key={t} points={t} fill="none" stroke="#161616" strokeWidth="1.100" />
      ))}
      {nodes.map(([x, y]) => (
        <circle key={`${x}-${y}`} cx={x} cy={y} r="2" fill="#0a1ed2" stroke="#10184e" strokeWidth="1" />
      ))}
    </g>
  </svg>
);

const MapPanel = () => (
  <section className="flex h-[392px] shrink-0 flex-col rounded-t border border-[#a0a0a0]">
    <TabBar>
      <Tab icon="map" label="Map" active />
      <Tab icon="map3d" label="Map 3D" />
    </TabBar>
    <div className="flex h-10 shrink-0 items-center overflow-hidden pl-[2px]">
      {mapTools.map((t, i) => (t ? <ToolButton key={i} tool={t} /> : <span key={i} className="w-2 shrink-0" />))}
    </div>
    <div className="mx-[2px] mb-[2px] flex min-h-0 flex-1 border border-[#c8c8c8]">
      <div className="flex w-[43px] shrink-0 flex-col items-start gap-3 pl-[10px] pt-[11px]">
        {["node", "edge", "directed", "flow"].map((kind) => (
          <button key={kind} aria-label={kind}>
            <LinkIcon kind={kind} />
          </button>
        ))}
        <div className="flex flex-col gap-[13px] pl-px">
          {["fuel", "storage", "plant", "crusher", "blender", "stopeWide", "crossdock", "skip"].map((name) => (
            <button key={name} aria-label={name}>
              {icons[name]}
            </button>
          ))}
        </div>
      </div>
      <div className="relative min-w-0 flex-1 overflow-hidden">
        <Plan />
        <div className="absolute bottom-[14px] right-0 top-0 flex w-[14px] flex-col items-center bg-[#ececec]/50 py-px">
          <Chevron className="rotate-180" color="#c4c4c4" />
          <div className="flex-[141]" />
          <div className="w-2.5 flex-[75] rounded-sm border border-[#d2d2d2] bg-white/50" />
          <div className="flex-[73]" />
          <Chevron color="#c4c4c4" />
        </div>
        <div className="absolute bottom-0 left-0 right-[14px] flex h-[14px] items-center bg-[#efefef]/50 pr-px">
          <div className="flex-[163]" />
          <div className="h-2.5 flex-[818] rounded-sm border border-[#d2d2d2] bg-white/10" />
          <div className="flex-[84]" />
          <Chevron className="-rotate-90" color="#c4c4c4" />
        </div>
      </div>
    </div>
  </section>
);

const PropertiesPanel = () => (
  <section className="flex min-h-0 flex-1 flex-col rounded-t border border-[#a0a0a0]">
    <TabBar>
      <Tab icon="properties" label="Properties" active />
    </TabBar>
    <div className="mx-[2px] mb-[2px] mt-[2px] flex-1 bg-[#fdfdfd]">
      <div className="h-[26px] bg-[#fafafa]" />
    </div>
  </section>
);

const StatusBar = () => (
  <footer className="grid h-[14px] shrink-0 grid-cols-[316px_158px_633px_1fr] items-start whitespace-nowrap px-[5px] leading-4">
    <span>Editor</span>
    <span>X: 28 110,59, Y: 30 982,60</span>
    <span>Licensed to 'ООО "Амальгама"'</span>
    <span className="flex justify-between">
      <span>Version: 1.5.3</span>
      <span>Memory Usage: 325 of 8192 MB</span>
    </span>
  </footer>
);

const App = () => {
  const [selected, setSelected] = useState("Equipment types");

  return (
    <div className="flex h-screen flex-col overflow-hidden bg-[#f0f0f0] font-['Roboto','Open_Sans',sans-serif] text-[12px] leading-4 text-black">
      <TitleBar />
      <MainToolbar />
      <main className="flex min-h-0 flex-1 gap-1">
        <div className="flex w-[436px] shrink-0 flex-col gap-1">
          <EditorPanel selected={selected} onSelect={setSelected} />
          <ErrorsPanel />
        </div>
        <div className="flex min-w-0 flex-1 flex-col gap-1">
          <MapPanel />
          <PropertiesPanel />
        </div>
      </main>
      <StatusBar />
    </div>
  );
};

export default App;
